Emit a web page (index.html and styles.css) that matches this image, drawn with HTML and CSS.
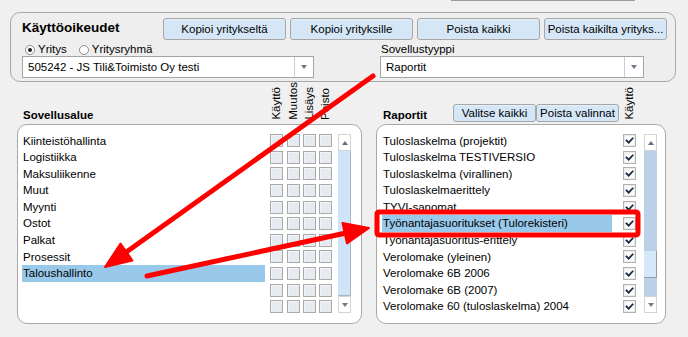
FILE: index.html
```html
<!DOCTYPE html>
<html lang="fi">
<head>
<meta charset="utf-8">
<title>Käyttöoikeudet</title>
<link rel="stylesheet" href="styles.css">
</head>
<body>
<div class="stub-row"><div class="stub"></div></div>

<section class="panel">
  <div class="panel-top">
    <h1 class="title">Käyttöoikeudet</h1>
    <div class="actions">
      <button class="btn">Kopioi yritykseltä</button>
      <button class="btn">Kopioi yrityksille</button>
      <button class="btn">Poista kaikki</button>
      <button class="btn">Poista kaikilta yrityks...</button>
    </div>
  </div>
  <div class="panel-grid">
    <div class="radios">
      <label class="radio"><span class="dot on"></span>Yritys</label>
      <label class="radio"><span class="dot"></span>Yritysryhmä</label>
    </div>
    <div class="field-label">Sovellustyyppi</div>
    <div class="combo"><span class="combo-text">505242 - JS Tili&amp;Toimisto Oy testi</span><span class="combo-btn"><i class="tri-down"></i></span></div>
    <div class="combo"><span class="combo-text">Raportit</span><span class="combo-btn"><i class="tri-down"></i></span></div>
  </div>
</section>

<div class="lower">
  <section class="col col-left">
    <div class="col-head">
      <div class="head-label hl-left">Sovellusalue</div>
      <div class="vhead w17"><span>Käyttö</span></div>
      <div class="vhead w16"><span>Muutos</span></div>
      <div class="vhead w16"><span>Lisäys</span></div>
      <div class="vhead w16"><span>Poisto</span></div>
    </div>
    <div class="box box-left">
      <div class="rows">
        <div class="row"><div class="name">Kiinteistöhallinta</div><div class="cell w17"><i class="cb"></i></div><div class="cell w16"><i class="cb"></i></div><div class="cell w16"><i class="cb"></i></div><div class="cell w16"><i class="cb"></i></div></div>
        <div class="row"><div class="name">Logistiikka</div><div class="cell w17"><i class="cb"></i></div><div class="cell w16"><i class="cb"></i></div><div class="cell w16"><i class="cb"></i></div><div class="cell w16"><i class="cb"></i></div></div>
        <div class="row"><div class="name">Maksuliikenne</div><div class="cell w17"><i class="cb"></i></div><div class="cell w16"><i class="cb"></i></div><div class="cell w16"><i class="cb"></i></div><div class="cell w16"><i class="cb"></i></div></div>
        <div class="row"><div class="name">Muut</div><div class="cell w17"><i class="cb"></i></div><div class="cell w16"><i class="cb"></i></div><div class="cell w16"><i class="cb"></i></div><div class="cell w16"><i class="cb"></i></div></div>
        <div class="row"><div class="name">Myynti</div><div class="cell w17"><i class="cb"></i></div><div class="cell w16"><i class="cb"></i></div><div class="cell w16"><i class="cb"></i></div><div class="cell w16"><i class="cb"></i></div></div>
        <div class="row"><div class="name">Ostot</div><div class="cell w17"><i class="cb"></i></div><div class="cell w16"><i class="cb"></i></div><div class="cell w16"><i class="cb"></i></div><div class="cell w16"><i class="cb"></i></div></div>
        <div class="row"><div class="name">Palkat</div><div class="cell w17"><i class="cb"></i></div><div class="cell w16"><i class="cb"></i></div><div class="cell w16"><i class="cb"></i></div><div class="cell w16"><i class="cb"></i></div></div>
        <div class="row"><div class="name">Prosessit</div><div class="cell w17"><i class="cb"></i></div><div class="cell w16"><i class="cb"></i></div><div class="cell w16"><i class="cb"></i></div><div class="cell w16"><i class="cb"></i></div></div>
        <div class="row"><div class="name sel">Taloushallinto</div><div class="cell w17"><i class="cb"></i></div><div class="cell w16"><i class="cb"></i></div><div class="cell w16"><i class="cb"></i></div><div class="cell w16"><i class="cb"></i></div></div>
        <div class="row"><div class="name"></div><div class="cell w17"><i class="cb"></i></div><div class="cell w16"><i class="cb"></i></div><div class="cell w16"><i class="cb"></i></div><div class="cell w16"><i class="cb"></i></div></div>
        <div class="row"><div class="name"></div><div class="cell w17"><i class="cb"></i></div><div class="cell w16"><i class="cb"></i></div><div class="cell w16"><i class="cb"></i></div><div class="cell w16"><i class="cb"></i></div></div>
      </div>
      <div class="sb sb-left">
        <div class="sb-btn"><i class="tri-up"></i></div>
        <div class="sb-track track-full"></div>
        <div class="sb-btn"><i class="tri-down"></i></div>
      </div>
    </div>
  </section>

  <section class="col col-right">
    <div class="col-head">
      <div class="head-label hl-right">Raportit</div>
      <div class="mini-actions">
        <button class="btn btn-sm">Valitse kaikki</button>
        <button class="btn btn-sm">Poista valinnat</button>
      </div>
      <div class="vhead w21"><span>Käyttö</span></div>
    </div>
    <div class="box box-right">
      <div class="rows">
        <div class="row"><div class="name rname">Tuloslaskelma (projektit)</div><div class="rcell"><i class="cb cb-on"><svg viewBox="0 0 11 11" width="11" height="11"><polyline points="2.5,5.5 4.7,7.6 8.6,3.4"/></svg></i></div></div>
        <div class="row"><div class="name rname">Tuloslaskelma TESTIVERSIO</div><div class="rcell"><i class="cb cb-on"><svg viewBox="0 0 11 11" width="11" height="11"><polyline points="2.5,5.5 4.7,7.6 8.6,3.4"/></svg></i></div></div>
        <div class="row"><div class="name rname">Tuloslaskelma (virallinen)</div><div class="rcell"><i class="cb cb-on"><svg viewBox="0 0 11 11" width="11" height="11"><polyline points="2.5,5.5 4.7,7.6 8.6,3.4"/></svg></i></div></div>
        <div class="row"><div class="name rname">Tuloslaskelmaerittely</div><div class="rcell"><i class="cb cb-on"><svg viewBox="0 0 11 11" width="11" height="11"><polyline points="2.5,5.5 4.7,7.6 8.6,3.4"/></svg></i></div></div>
        <div class="row"><div class="name rname">TYVI-sanomat</div><div class="rcell"><i class="cb cb-on"><svg viewBox="0 0 11 11" width="11" height="11"><polyline points="2.5,5.5 4.7,7.6 8.6,3.4"/></svg></i></div></div>
        <div class="row"><div class="name rname sel">Työnantajasuoritukset (Tulorekisteri)</div><div class="rcell"><i class="cb cb-on"><svg viewBox="0 0 11 11" width="11" height="11"><polyline points="2.5,5.5 4.7,7.6 8.6,3.4"/></svg></i></div></div>
        <div class="row"><div class="name rname">Työnantajasuoritus-erittely</div><div class="rcell"><i class="cb cb-on"><svg viewBox="0 0 11 11" width="11" height="11"><polyline points="2.5,5.5 4.7,7.6 8.6,3.4"/></svg></i></div></div>
        <div class="row"><div class="name rname">Verolomake (yleinen)</div><div class="rcell"><i class="cb cb-on"><svg viewBox="0 0 11 11" width="11" height="11"><polyline points="2.5,5.5 4.7,7.6 8.6,3.4"/></svg></i></div></div>
        <div class="row"><div class="name rname">Verolomake 6B 2006</div><div class="rcell"><i class="cb cb-on"><svg viewBox="0 0 11 11" width="11" height="11"><polyline points="2.5,5.5 4.7,7.6 8.6,3.4"/></svg></i></div></div>
        <div class="row"><div class="name rname">Verolomake 6B (2007)</div><div class="rcell"><i class="cb cb-on"><svg viewBox="0 0 11 11" width="11" height="11"><polyline points="2.5,5.5 4.7,7.6 8.6,3.4"/></svg></i></div></div>
        <div class="row"><div class="name rname">Verolomake 60 (tuloslaskelma) 2004</div><div class="rcell"><i class="cb cb-on"><svg viewBox="0 0 11 11" width="11" height="11"><polyline points="2.5,5.5 4.7,7.6 8.6,3.4"/></svg></i></div></div>
      </div>
      <div class="sb sb-right">
        <div class="sb-btn"><i class="tri-up"></i></div>
        <div class="sb-track track-part"><div class="thumb"></div></div>
        <div class="sb-btn"><i class="tri-down"></i></div>
      </div>
    </div>
  </section>
</div>

<svg class="annot" width="688" height="337" viewBox="0 0 688 337">
  <g fill="none" stroke="#ff0000" stroke-width="5" stroke-linecap="round" stroke-linejoin="round">
    <line x1="373" y1="76" x2="125" y2="253"/>
    <line x1="147" y1="276" x2="346" y2="233"/>
    <rect x="377" y="212" width="261" height="23" rx="2"/>
  </g>
  <g fill="#ff0000" stroke="#ff0000" stroke-width="2" stroke-linejoin="round">
    <polygon points="105,267 132.5,260.5 120.5,243.5"/>
    <polygon points="369,228 347,243.5 342.5,223"/>
  </g>
</svg>
</body>
</html>
```

FILE: styles.css
```css
* { box-sizing: border-box; }

html, body {
  margin: 0;
  padding: 0;
  background: #f0f0f0;
}

body {
  width: 688px;
  height: 337px;
  overflow: hidden;
  position: relative;
  font-family: "Liberation Sans", Arial, sans-serif;
  font-size: 11.5px;
  color: #000;
}

/* stub of element above */
.stub-row { height: 1px; }
.stub {
  margin-left: 451px;
  width: 184px;
  height: 1px;
  background: #9c9c9c;
}

/* top panel */
.panel {
  margin: 11px 0 0 10px;
  width: 666px;
  height: 70px;
  border: 1px solid #a8a8a8;
  border-radius: 10px;
  background: #eeeeee;
  padding: 5px 0 0 11px;
}

.panel-top {
  display: flex;
  align-items: flex-start;
  height: 22px;
}

.title {
  margin: 0;
  width: 141px;
  font-size: 13.5px;
  font-weight: bold;
  line-height: 19px;
}

.actions {
  display: flex;
  gap: 4px;
}

.btn {
  font-family: "Liberation Sans", Arial, sans-serif;
  font-size: 11.5px;
  color: #000;
  background: #d5e7f7;
  border: 1px solid #a6a6a6;
  border-radius: 3px;
  padding: 0;
  width: 123px;
  height: 22px;
  line-height: 20px;
  white-space: nowrap;
  box-shadow: inset 0 1px 0 #e4f0fa;
}

.panel-grid {
  display: grid;
  grid-template-columns: 292px 264px;
  grid-template-rows: 16px 22px;
  column-gap: 66px;
}

.radios {
  display: flex;
  padding-top: 2px;
  line-height: 14px;
}

.radio {
  display: flex;
  align-items: center;
  margin-right: 12px;
}
.radio:first-child { margin-left: 3px; }

.dot {
  width: 10px;
  height: 10px;
  border-radius: 50%;
  border: 1px solid #8e8e8e;
  background: #fff;
  margin: 2px 3px 0 0;
  display: flex;
  align-items: center;
  justify-content: center;
}
.dot.on::after {
  content: "";
  width: 4px;
  height: 4px;
  border-radius: 50%;
  background: #222;
}

.field-label {
  padding: 2px 0 0 1px;
  line-height: 14px;
}

.combo {
  display: flex;
  height: 22px;
  border: 1px solid #a5a5a5;
  background: #fff;
}
.combo-text {
  flex: 1;
  padding-left: 5px;
  line-height: 20px;
  white-space: nowrap;
}
.combo-btn {
  width: 19px;
  border-left: 1px solid #cdcdcd;
  display: flex;
  align-items: center;
  justify-content: center;
}

.tri-down {
  width: 0;
  height: 0;
  border-left: 3.5px solid transparent;
  border-right: 3.5px solid transparent;
  border-top: 4px solid #6c7a8e;
}
.tri-up {
  width: 0;
  height: 0;
  border-left: 3.5px solid transparent;
  border-right: 3.5px solid transparent;
  border-bottom: 4px solid #5f6f87;
}

/* lower section */
.lower {
  display: flex;
  margin: 1px 0 0 17px;
  gap: 14px;
}

.col-left { width: 345px; }
.col-right { width: 290px; }

.col-head {
  display: flex;
  align-items: flex-end;
  height: 41px;
}

.head-label {
  font-weight: bold;
  line-height: 14px;
  padding-bottom: 2px;
}
.hl-left { width: 251px; padding-left: 6px; }
.hl-right { width: 77px; padding-left: 7px; }

.vhead {
  display: flex;
  justify-content: center;
  align-items: flex-end;
  padding-bottom: 4px;
  height: 41px;
}
.vhead span {
  writing-mode: vertical-rl;
  transform: rotate(180deg);
  line-height: 11px;
  white-space: nowrap;
}
.w16 { width: 16px; }
.w17 { width: 17px; }
.w21 { width: 21px; }

.mini-actions {
  display: flex;
  margin-bottom: 2px;
}
.btn-sm {
  width: 83px;
  height: 18px;
  line-height: 16px;
}
.btn-sm + .btn-sm { margin-left: 0; }

.box {
  display: flex;
  height: 200px;
  border: 1px solid #a8a8a8;
  border-radius: 10px;
  background: #fff;
  padding-top: 7.5px;
}
.box-left { padding-left: 4px; }
.box-right { padding-left: 5px; }

.rows { display: flex; flex-direction: column; }

.row {
  display: flex;
  align-items: center;
  height: 16.6px;
}

.name {
  width: 243px;
  height: 16.6px;
  line-height: 16.6px;
  padding-left: 1px;
  margin-right: 3px;
  white-space: nowrap;
  overflow: hidden;
}
.rname { width: 230px; margin-right: 0; }
.sel { background: #99c9ea; }

.cell {
  display: flex;
  justify-content: center;
  align-items: center;
  height: 16.6px;
}
.cell.w16 { justify-content: flex-start; padding-left: 2px; }
.cell.w17 { justify-content: flex-start; padding-left: 2px; }

.cb {
  display: block;
  width: 13px;
  height: 13px;
  border: 1px solid #a9a9a9;
  background: #e6ebf2;
  box-shadow: inset 1px 1px 0 #f2f4f8;
}

.rcell {
  width: 24px;
  padding-left: 11px;
  display: flex;
  align-items: center;
  height: 16.6px;
}
.cb-on {
  background: #fbfbfb;
  border-color: #b2b2b2;
  box-shadow: inset 0 0 0 1px #ececec;
  display: flex;
  align-items: center;
  justify-content: center;
}
.cb-on svg polyline {
  fill: none;
  stroke: #1a2a44;
  stroke-width: 1.8;
  stroke-linecap: square;
}

/* scrollbars */
.sb {
  display: flex;
  flex-direction: column;
  width: 13px;
  height: 179px;
  margin-top: 1.5px;
}
.sb-left { margin-left: 5px; }
.sb-right { margin-left: 8px; }

.sb-btn {
  height: 17px;
  background: #fff;
  border: 1px solid #d4d4d4;
  display: flex;
  align-items: center;
  justify-content: center;
}

.sb-track { flex: 1; }
.track-full {
  background: #cfe4f7;
  border-right: 1px solid #a9b6c3;
  border-bottom: 1px solid #a9b6c3;
}
.track-part { background: #bcd0e7; }

.thumb {
  margin-top: 100px;
  height: 27px;
  background: #d4e8f9;
  border-right: 1px solid #9a9a9a;
  border-bottom: 1px solid #9a9a9a;
}

/* annotation overlay */
.annot {
  position: absolute;
  left: 0;
  top: 0;
  pointer-events: none;
}
```
